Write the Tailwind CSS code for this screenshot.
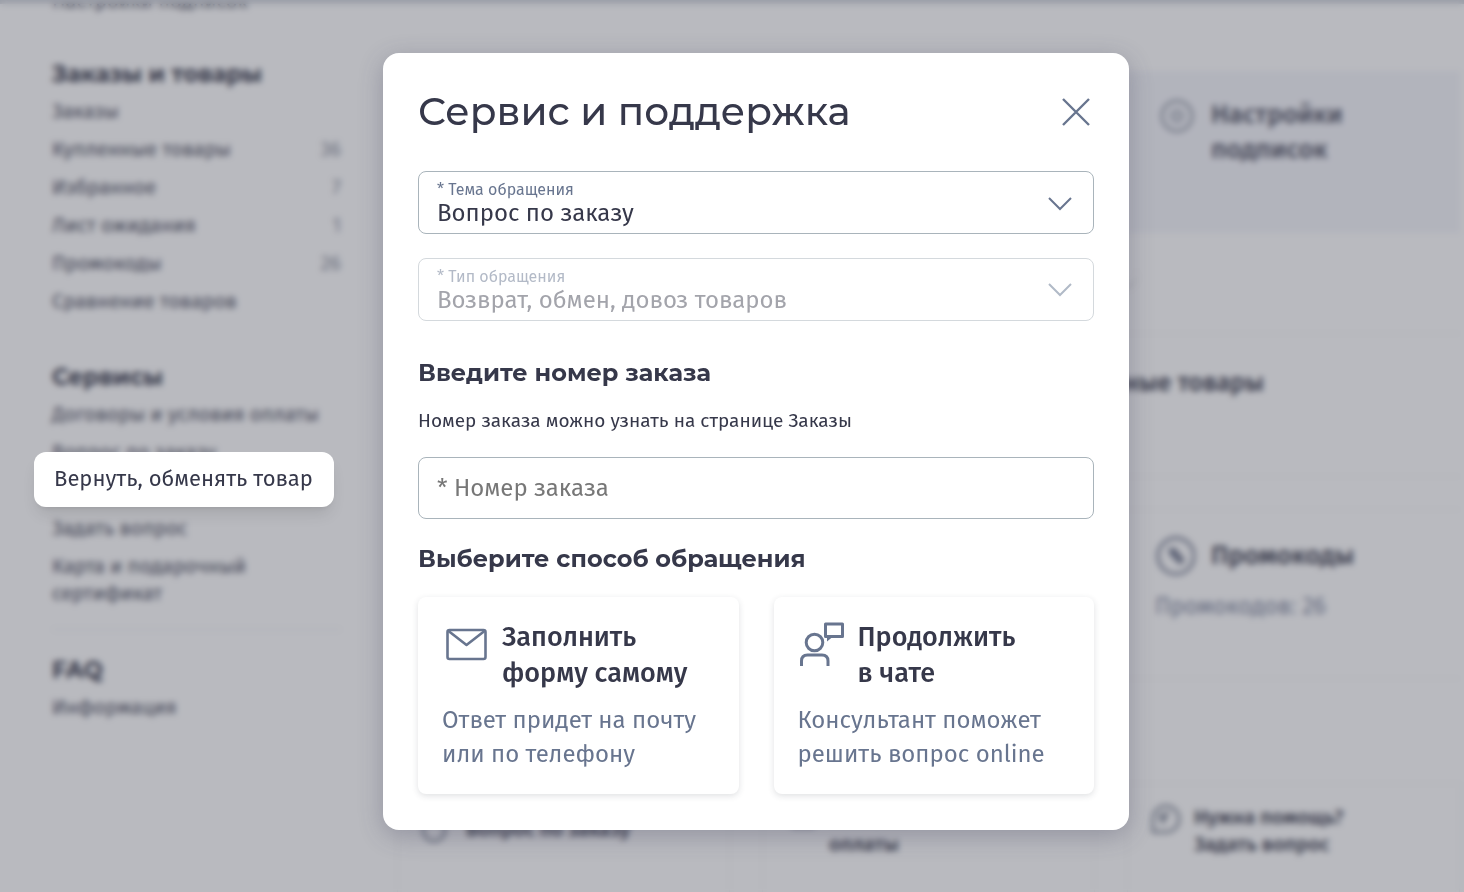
<!DOCTYPE html>
<html lang="ru">
<head>
  <meta charset="UTF-8" />
  <title>Сервис и поддержка</title>
  <meta name="viewport" content="width=device-width, initial-scale=1" />
  <script src="https://cdn.jsdelivr.net/npm/@tailwindcss/browser@4"></script>
</head>

<body class="h-screen overflow-hidden bg-white text-[#36384a] font-['Fira_Sans','Noto_Sans',sans-serif]">

  <!-- Личный кабинет -->
  <div class="flex h-full overflow-hidden border-t-4 border-gray-300">
    <aside class="w-[361px] shrink-0 pl-[52px] pr-5 -mt-4 text-[20px] leading-[27px]">
      <a href="#" class="block">Настройки подписок</a>

      <h2 class="mt-[43px] text-[23px] leading-8 font-bold font-[Montserrat,'Open_Sans',sans-serif]">Заказы и товары</h2>
      <ul class="mt-2 space-y-[11px] text-[#4b4d5e]">
        <li><a href="#">Заказы</a></li>
        <li class="flex justify-between"><a href="#">Купленные товары</a><span class="text-[#8b909e]">36</span></li>
        <li class="flex justify-between"><a href="#">Избранное</a><span class="text-[#8b909e]">7</span></li>
        <li class="flex justify-between"><a href="#">Лист ожидания</a><span class="text-[#8b909e]">1</span></li>
        <li class="flex justify-between"><a href="#">Промокоды</a><span class="text-[#8b909e]">26</span></li>
        <li><a href="#">Сравнение товаров</a></li>
      </ul>

      <h2 class="mt-[46px] text-[23px] leading-8 font-bold font-[Montserrat,'Open_Sans',sans-serif]">Сервисы</h2>
      <ul class="mt-2 space-y-[11px] text-[#4b4d5e]">
        <li><a href="#">Договоры и условия оплаты</a></li>
        <li><a href="#">Вопрос по заказу</a></li>
        <li class="relative h-[27px]">
          <a href="#" class="absolute z-20 -left-[18px] -top-[25px] h-[55px] w-[300px] pl-5 pt-3 rounded-xl bg-white text-[22px] leading-[30px] text-[#36384a] whitespace-nowrap shadow-lg">Вернуть, обменять товар</a>
        </li>
        <li><a href="#">Задать вопрос</a></li>
        <li><a href="#">Карта и подарочный<br>сертификат</a></li>
      </ul>

      <hr class="mt-[22px] border-gray-200" />
      <h2 class="mt-6 text-[23px] leading-8 font-bold font-[Montserrat,'Open_Sans',sans-serif]">FAQ</h2>
      <ul class="mt-2 text-[#4b4d5e]">
        <li><a href="#">Информация</a></li>
      </ul>
    </aside>

    <main class="grow pl-9 pr-1 pt-[67px]">
      <div class="grid grid-cols-3 gap-8">
        <div class="h-[162px]"></div>
        <div class="h-[162px]"></div>
        <div class="h-[162px] bg-[#f5f6fb] flex gap-4 pl-8 pt-[26px] text-[26px] leading-[35px] font-medium text-[#4b4d5e]">
          <svg class="w-9 h-9 shrink-0" viewBox="0 0 36 36" fill="none" stroke="#8b92a0" stroke-width="2.5"><circle cx="18" cy="19" r="15"/><circle cx="18" cy="19" r="5"/></svg>
          <span>Настройки<br>подписок</span>
        </div>
      </div>

      <div class="flex mt-7 h-6 pr-[324px] justify-end">
        <button class="w-6 h-6 rounded-full bg-white shadow-md" aria-label="Далее"></button>
      </div>

      <section class="mt-12 h-[144px] border-y border-gray-100 pt-[33px] pr-[196px] text-right">
        <h2 class="text-[25px] leading-8 font-medium">Купленные товары</h2>
      </section>

      <div class="grid grid-cols-3 gap-8 mt-8">
        <div class="h-[170px]"></div>
        <div class="h-[170px]"></div>
        <div class="h-[170px] border-y border-gray-100 pl-7 pt-[26px]">
          <div class="flex items-center gap-4">
            <svg class="w-10 h-10 shrink-0" viewBox="0 0 40 40" fill="none" stroke="#777e93" stroke-width="3"><circle cx="21" cy="20" r="18"/><path d="M15 14l4-1 9 11-3 3-9-9z" fill="#777e93"/></svg>
            <h3 class="text-[26px] leading-9 font-medium">Промокоды</h3>
          </div>
          <p class="mt-4 text-[23px] leading-7 text-[#8088a0]">Промокодов: 26</p>
        </div>
      </div>

      <div class="grid grid-cols-3 gap-8 mt-[104px] text-[20px] leading-[27px] font-medium">
        <a href="#" class="flex gap-4 h-28 border border-gray-100 pl-6 pt-8">
          <svg class="w-7 h-7 shrink-0" viewBox="0 0 28 28" fill="none" stroke="#8b92a0" stroke-width="3"><circle cx="12" cy="14" r="11"/></svg>
          <span>Вопрос по заказу</span>
        </a>
        <a href="#" class="flex gap-3 h-28 border border-gray-100 pl-[26px] pt-5">
          <svg class="w-7 h-7 shrink-0" viewBox="0 0 28 28" fill="none" stroke="#777e93" stroke-width="3"><path d="M4 6h20v16H4z"/></svg>
          <span>Условия<br>оплаты</span>
        </a>
        <a href="#" class="flex gap-3 h-28 border border-gray-100 pl-[22px] pt-5">
          <svg class="w-8 h-8 shrink-0" viewBox="0 0 32 32" fill="none" stroke="#8b92a0" stroke-width="3"><path d="M3 28V15a13 13 0 1 1 13 13z"/><path d="M10 12l7-2-4 8z" fill="#777e93"/></svg>
          <span>Нужна помощь?<br>Задать вопрос</span>
        </a>
      </div>
    </main>
  </div>

  <div class="fixed inset-0 z-10 bg-[#333444]/34 backdrop-blur-[3px]"></div>

  <!-- Модальное окно -->
  <div class="fixed inset-0 z-30 flex items-start justify-center pt-[53px] pl-12 pointer-events-none">
    <form role="dialog" aria-labelledby="modalTitle" class="pointer-events-auto w-full max-w-[746px] rounded-2xl bg-white px-[35px] pt-8 pb-9 shadow-[0_6px_24px_rgba(60,60,90,0.3)]">
      <div class="flex items-center justify-between h-[52px]">
        <h1 id="modalTitle" class="text-[39px] leading-[52px] font-medium font-[Montserrat,'Open_Sans',sans-serif]">Сервис и поддержка</h1>
        <button type="button" aria-label="Закрыть">
          <svg class="w-9 h-9" viewBox="0 0 36 36" fill="none" stroke="#68758f" stroke-width="2.4"><path d="M5 6l26 26M31 6L5 32"/></svg>
        </button>
      </div>

      <div class="relative mt-[34px]">
        <label for="topic" class="absolute left-[19px] top-2 text-[16px] leading-[22px] text-[#68758f]">* Тема обращения</label>
        <select id="topic" class="block w-full h-[63px] appearance-none rounded-lg border border-[#a9b4bb] bg-white pl-[18px] pr-14 pt-5 text-[24px] leading-[30px]">
          <option>Вопрос по заказу</option>
        </select>
        <svg class="absolute right-[22px] top-5 w-6 h-6 pointer-events-none" viewBox="0 0 24 24" fill="none" stroke="#68758f" stroke-width="2"><path d="M1 7l11 11L23 7"/></svg>
      </div>

      <div class="relative mt-6">
        <label for="kind" class="absolute left-[19px] top-2 text-[16px] leading-[22px] text-[#b3bac7]">* Тип обращения</label>
        <select id="kind" disabled class="block w-full h-[63px] appearance-none rounded-lg border border-[#d4d9dd] bg-white pl-[18px] pr-14 pt-5 text-[24px] leading-[30px] text-[#a3a4ab] opacity-100">
          <option>Возврат, обмен, довоз товаров</option>
        </select>
        <svg class="absolute right-[22px] top-5 w-6 h-6 pointer-events-none" viewBox="0 0 24 24" fill="none" stroke="#b1bac7" stroke-width="2"><path d="M1 6l11 11L23 6"/></svg>
      </div>

      <h2 class="mt-9 text-[24px] leading-8 font-bold font-[Montserrat,'Open_Sans',sans-serif]">Введите номер заказа</h2>
      <p class="mt-4 text-[19px] leading-8">Номер заказа можно узнать на странице Заказы</p>
      <input type="text" aria-label="Номер заказа" placeholder="* Номер заказа" class="block mt-5 w-full h-[62px] rounded-lg border border-[#a9b4bb] px-[18px] text-[24px] placeholder:text-[#777777]" />

      <h2 class="mt-6 text-[24px] leading-8 font-bold font-[Montserrat,'Open_Sans',sans-serif]">Выберите способ обращения</h2>
      <div class="mt-[22px] grid grid-cols-2 gap-[35px]">
        <button type="button" class="h-[197px] rounded-lg px-6 pt-[22px] text-left flex flex-col justify-start shadow-[0_2px_6px_rgba(50,52,68,0.15)]">
          <span class="flex gap-3">
            <svg class="w-12 h-12 shrink-0" viewBox="0 0 48 48" fill="none" stroke="#68758f" stroke-width="2.6" stroke-linejoin="round"><rect x="5.500" y="11" width="38" height="29" rx="2"/><path d="M6.500 12l18 14 18-14"/></svg>
            <span class="text-[27px] leading-9 font-medium">Заполнить<br>форму самому</span>
          </span>
          <span class="mt-3 text-[24px] leading-[34px] text-[#68758f]">Ответ придет на почту<br>или по телефону</span>
        </button>
        <button type="button" class="h-[197px] rounded-lg px-6 pt-[22px] text-left flex flex-col justify-start shadow-[0_2px_6px_rgba(50,52,68,0.15)]">
          <span class="flex gap-3">
            <svg class="w-12 h-12 shrink-0" viewBox="0 0 48 48" fill="none" stroke="#68758f" stroke-width="3" stroke-linejoin="round"><circle cx="16.500" cy="23.500" r="8.300"/><path d="M3.500 47v-5c0-4 2-6 6-6h14.500c4 0 6 2 6 6v5"/><rect x="27.500" y="5" width="17" height="12.500"/><path d="M29 18v4.500l5.500-4.500z" fill="#68758f" stroke="none"/></svg>
            <span class="text-[27px] leading-9 font-medium">Продолжить<br>в чате</span>
          </span>
          <span class="mt-3 text-[24px] leading-[34px] text-[#68758f]">Консультант поможет<br>решить вопрос online</span>
        </button>
      </div>
    </form>
  </div>

</body>
</html>
